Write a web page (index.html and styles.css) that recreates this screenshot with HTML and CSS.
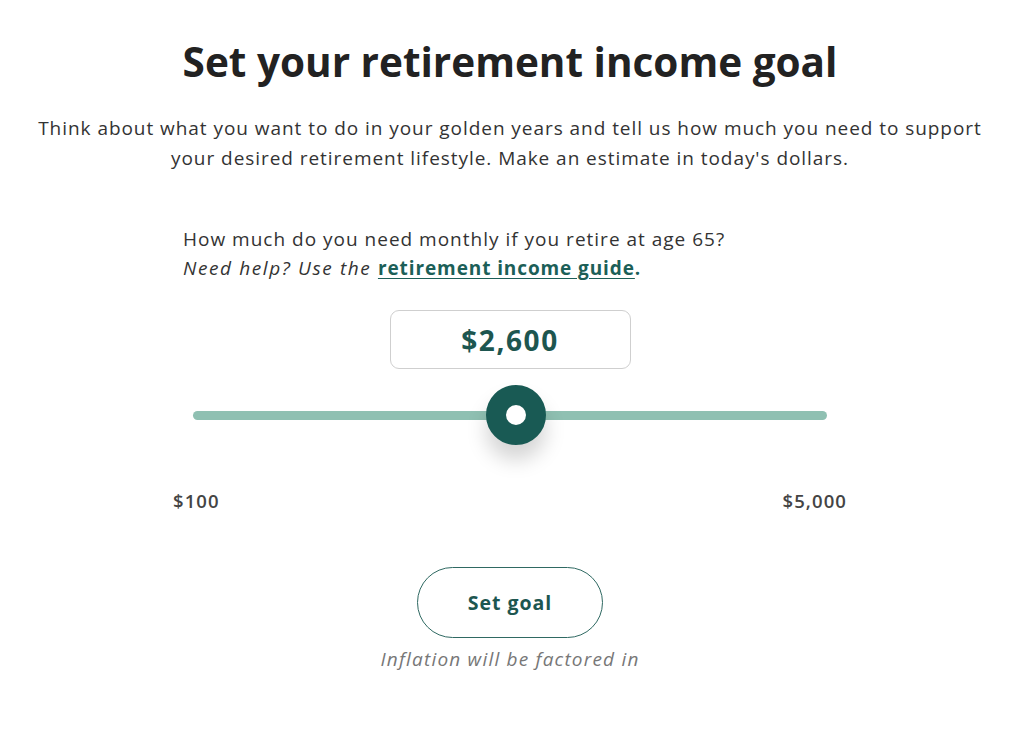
FILE: index.html
```html
<!DOCTYPE html>
<html lang="en">
<head>
<meta charset="utf-8">
<title>Set your retirement income goal</title>
<link rel="stylesheet" href="styles.css">
</head>
<body>
<main class="page">
  <h1 class="title">Set your retirement income goal</h1>
  <p class="intro">Think about what you want to do in your golden years and tell us how much you need to support your desired retirement lifestyle. Make an estimate in today's dollars.</p>
  <section class="goal">
    <p class="question">How much do you need monthly if you retire at age 65?<br><em>Need help? Use the <a class="guide-link" href="#">retirement income guide</a><strong>.</strong></em></p>
    <div class="amount">$2,600</div>
    <div class="slider">
      <div class="track"></div>
      <div class="thumb" style="left: 51%"></div>
    </div>
    <div class="range-labels"><span>$100</span><span>$5,000</span></div>
    <button class="set-goal" type="button">Set goal</button>
    <p class="note">Inflation will be factored in</p>
  </section>
</main>
</body>
</html>
```

FILE: styles.css
```css
* { box-sizing: border-box; }
html, body { margin: 0; padding: 0; background: #fff; }
body {
  font-family: "Open Sans", "DejaVu Sans", sans-serif;
  color: #333;
}
.page {
  display: flex;
  flex-direction: column;
  align-items: center;
  padding: 34px 4px 0 0;
}
.title {
  margin: 0;
  font-size: 40.5px;
  line-height: 56px;
  font-weight: 700;
  color: #222;
}
.intro {
  margin: 23px 0 0;
  width: 960px;
  text-align: center;
  font-size: 19px;
  line-height: 30px;
  letter-spacing: 0.95px;
  color: #333;
}
.goal {
  width: 674px;
  margin-top: 52px;
  display: flex;
  flex-direction: column;
  align-items: center;
}
.question {
  align-self: stretch;
  margin: 0 0 0 10px;
  font-size: 19px;
  line-height: 29px;
  letter-spacing: 1px;
  color: #333;
}
.question em { font-style: italic; letter-spacing: 1.6px; }
.guide-link {
  color: #1c5f58;
  font-weight: 700;
  font-style: normal;
  letter-spacing: 0.9px;
  text-decoration: underline;
  text-underline-offset: 3px;
}
.question strong { color: #1c5f58; font-style: normal; }
.amount {
  margin-top: 27px;
  width: 241px;
  height: 59px;
  border: 1px solid #cfcfcf;
  border-radius: 9px;
  display: flex;
  align-items: center;
  justify-content: center;
  font-size: 28px;
  font-weight: 700;
  letter-spacing: 1.6px;
  color: #1d5650;
}
.slider {
  position: relative;
  width: 634px;
  height: 60px;
  margin-top: 16px;
  display: flex;
  align-items: center;
}
.track {
  width: 100%;
  height: 9px;
  border-radius: 5px;
  background: #8fc0b2;
}
.thumb {
  position: absolute;
  top: 0;
  width: 60px;
  height: 60px;
  margin-left: -30px;
  border-radius: 50%;
  background: #fff;
  border: 20px solid #195a54;
  box-shadow: 0 15px 20px rgba(0, 0, 0, 0.17);
}
.range-labels {
  align-self: stretch;
  display: flex;
  justify-content: space-between;
  margin-top: 43px;
  font-size: 18.5px;
  font-weight: 600;
  letter-spacing: 1.1px;
  color: #444;
}
.set-goal {
  margin-top: 54px;
  width: 186px;
  height: 71px;
  border: 1px solid #2f6962;
  border-radius: 36px;
  background: #fff;
  font-family: inherit;
  font-size: 19.5px;
  font-weight: 700;
  letter-spacing: 1px;
  color: #1d5650;
  cursor: pointer;
}
.note {
  margin: 8px 0 0;
  font-size: 19px;
  line-height: 26px;
  font-style: italic;
  letter-spacing: 1.2px;
  color: #777;
}
```
